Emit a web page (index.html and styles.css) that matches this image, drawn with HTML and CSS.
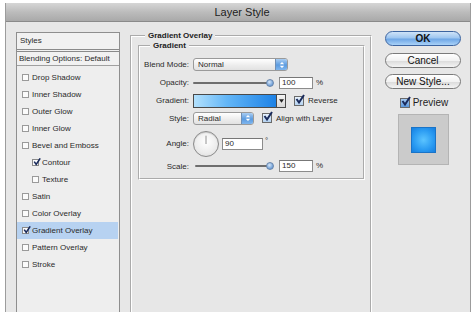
FILE: index.html
```html
<!DOCTYPE html>
<html>
<head>
<meta charset="utf-8">
<link rel="stylesheet" href="styles.css">
</head>
<body>
<div class="window">
  <div class="titlebar">Layer Style</div>
  <div class="content">
    <div class="styles">
      <div class="hdr first">Styles</div>
      <div class="hdr blend">Blending Options: Default</div>
      <ul class="items">
        <li><span class="cb"></span>Drop Shadow</li>
        <li><span class="cb"></span>Inner Shadow</li>
        <li><span class="cb"></span>Outer Glow</li>
        <li><span class="cb"></span>Inner Glow</li>
        <li><span class="cb"></span>Bevel and Emboss</li>
        <li class="sub"><span class="cb on"><svg viewBox="0 0 10 10"><path d="M1.5 4.5 L4 8 L9 0.5" fill="none" stroke="#1a2b5c" stroke-width="2"/></svg></span>Contour</li>
        <li class="sub"><span class="cb"></span>Texture</li>
        <li><span class="cb"></span>Satin</li>
        <li><span class="cb"></span>Color Overlay</li>
        <li class="sel"><span class="cb on"><svg viewBox="0 0 10 10"><path d="M1.5 4.5 L4 8 L9 0.5" fill="none" stroke="#1a2b5c" stroke-width="2"/></svg></span>Gradient Overlay</li>
        <li><span class="cb"></span>Pattern Overlay</li>
        <li><span class="cb"></span>Stroke</li>
      </ul>
    </div>

    <fieldset class="group outer">
      <legend>Gradient Overlay</legend>
      <fieldset class="group inner">
        <legend>Gradient</legend>
        <div class="form">
          <label>Blend Mode:</label>
          <div class="ctl">
            <div class="select wide"><span>Normal</span><span class="step"><svg viewBox="0 0 8 10"><path d="M4 1 L7 4 H1 Z M4 9 L7 6 H1 Z" fill="#fff"/></svg></span></div>
          </div>

          <label>Opacity:</label>
          <div class="ctl">
            <div class="slider"><span class="track"></span><span class="knob"></span></div>
            <div class="input num">100</div><span class="unit">%</span>
          </div>

          <label>Gradient:</label>
          <div class="ctl">
            <div class="swatch"><span class="grad"></span><span class="drop"><svg viewBox="0 0 6 4"><path d="M0 0 H6 L3 4 Z" fill="#222"/></svg></span></div>
            <span class="check"><svg viewBox="0 0 10 10"><path d="M1.5 4.5 L4 8 L9 0.5" fill="none" stroke="#1a2b5c" stroke-width="2"/></svg></span>
            <span class="ctext">Reverse</span>
          </div>

          <label>Style:</label>
          <div class="ctl">
            <div class="select narrow"><span>Radial</span><span class="step"><svg viewBox="0 0 8 10"><path d="M4 1 L7 4 H1 Z M4 9 L7 6 H1 Z" fill="#fff"/></svg></span></div>
            <span class="check"><svg viewBox="0 0 10 10"><path d="M1.5 4.5 L4 8 L9 0.5" fill="none" stroke="#1a2b5c" stroke-width="2"/></svg></span>
            <span class="ctext">Align with Layer</span>
          </div>

          <label>Angle:</label>
          <div class="ctl">
            <div class="dial"><svg viewBox="0 0 26 26"><line x1="13" y1="13" x2="13" y2="4" stroke="#8a8a8a" stroke-width="1"/></svg></div>
            <div class="input angle">90</div><span class="deg">°</span>
          </div>

          <label>Scale:</label>
          <div class="ctl">
            <div class="slider scale"><span class="track"></span><span class="knob"></span></div>
            <div class="input num">150</div><span class="unit">%</span>
          </div>
        </div>
      </fieldset>
    </fieldset>

    <div class="side">
      <div class="btn ok">OK</div>
      <div class="btn">Cancel</div>
      <div class="btn">New Style...</div>
      <div class="preview-row"><span class="check big"><svg viewBox="0 0 10 10"><path d="M1.5 4.5 L4 8 L9 0.5" fill="none" stroke="#1a2b5c" stroke-width="2"/></svg></span><span>Preview</span></div>
      <div class="preview"><span class="sq"></span></div>
    </div>
  </div>
</div>
</body>
</html>
```

FILE: styles.css
```css
* { box-sizing: border-box; }
html, body { margin: 0; padding: 0; background: #fff; }
body {
  width: 471px;
  height: 316px;
  overflow: hidden;
  font-family: "Liberation Sans", Arial, sans-serif;
  color: #1e1e1e;
  padding: 3px 0 0 5px;
}
.window {
  width: 466px;
  height: 309px;
  background: #e7e7e7;
  border-left: 1px solid #9c9c9c;
  border-right: 1px solid #9c9c9c;
  display: flex;
  flex-direction: column;
}
.titlebar {
  height: 19px;
  flex: none;
  background: linear-gradient(#d6d6d6, #bcbcbc 50%, #a9a9a9);
  border-bottom: 1px solid #8a8a8a;
  text-align: center;
  font-size: 11px;
  line-height: 19px;
  color: #222;
  padding-left: 8px;
}
.content {
  flex: 1;
  display: flex;
  align-items: stretch;
  padding: 9px 0 0 10px;
  min-height: 0;
}

/* Styles list */
.styles {
  width: 104px;
  flex: none;
  margin-top: 1px;
  background: #eeeeee;
  border: 1px solid #8e8e8e;
  border-bottom: none;
  font-size: 8px;
  color: #2a2a2a;
}
.hdr {
  height: 16px;
  line-height: 16px;
  padding-left: 3px;
  background: #f1f1f1;
}
.hdr.first { border-bottom: 3px double #8a8a8a; height: 19px; }
.hdr.blend { border-bottom: 1px solid #a0a0a0; height: 14px; line-height: 13px; padding-left: 2px; }
.items { list-style: none; margin: 0; padding: 3px 0 0 0; }
.items li {
  height: 17px;
  display: flex;
  align-items: center;
  padding-left: 5px;
  margin-right: 1px;
}
.items li.sub { padding-left: 15px; }
.items li.sel { background: #b7d2f1; }
.cb {
  width: 7px;
  height: 7px;
  border: 1px solid #9a9a9a;
  background: #fbfbfb;
  margin-right: 3px;
  flex: none;
  position: relative;
}
.cb.on { border-color: #8a8a8a; }
.cb svg { position: absolute; left: 0; top: -2px; width: 8px; height: 8px; }

/* Group boxes */
fieldset.group {
  margin: 0;
  border: 2px groove #ffffff;
  min-width: 0;
}
fieldset.group legend {
  font-size: 8px;
  font-weight: bold;
  line-height: 9px;
  padding: 0 3px;
  color: #222;
}
.outer {
  width: 242px;
  flex: none;
  margin-left: 10px !important;
  margin-top: 0 !important;
  padding: 0 6px 0 6px;
  border-bottom: none !important;
}
.outer > legend { margin-left: 7px; }
.inner {
  width: 227px;
  padding: 0 0 6px 0;
  margin-top: 1px !important;
}
.inner > legend { margin-left: 10px; }

.form {
  display: grid;
  grid-template-columns: 49px 1fr;
  grid-template-rows: 17px 19px 17px 18px 33px 12px;
  column-gap: 4px;
  align-items: center;
  padding-top: 6px;
  font-size: 8px;
  color: #2a2a2a;
}
.form label { text-align: right; }
.ctl { display: flex; align-items: center; }

.select {
  height: 13px;
  border: 1px solid #9a9a9a;
  border-radius: 3px;
  background: linear-gradient(#ffffff, #ececec 60%, #e2e2e2);
  display: flex;
  align-items: center;
  justify-content: space-between;
  padding-left: 4px;
  font-size: 8px;
  overflow: hidden;
}
.select.wide { width: 95px; }
.select.narrow { width: 61px; }
.step {
  width: 12px;
  height: 11px;
  background: linear-gradient(#a9cdf2, #5b9be0 55%, #7fb6ee);
  border-left: 1px solid #6f8fb5;
  display: flex;
  align-items: center;
  justify-content: center;
}
.step svg { width: 6px; height: 8px; }

.slider {
  width: 81px;
  height: 9px;
  display: flex;
  align-items: center;
}
.slider.scale { width: 79px; margin-left: 2px; }
.track {
  flex: 1;
  height: 2px;
  background: #6e6e6e;
  border-radius: 1px;
}
.knob {
  width: 8px;
  height: 8px;
  border-radius: 50%;
  background: radial-gradient(circle at 40% 35%, #d6e6f8, #6e9fd8 70%);
  border: 1px solid #6a86aa;
  margin-left: -3px;
  flex: none;
}
.input {
  height: 12px;
  border: 1px solid #8c8c8c;
  border-top-color: #777;
  background: #fff;
  font-size: 8px;
  line-height: 10px;
  padding-left: 2px;
}
.input.num { width: 34px; margin-left: 5px; }
.unit { margin-left: 3px; font-size: 8px; align-self: flex-start; margin-top: 1px; }
.deg { margin-left: 2px; font-size: 8px; margin-top: -6px; }
.swatch {
  width: 93px;
  height: 14px;
  display: flex;
  border: 1px solid #4a4a4a;
}
.grad {
  flex: 1;
  background: linear-gradient(90deg, #b3e1fd, #63b6f7 40%, #1d82e6);
  border-right: 1px solid #4a4a4a;
}
.drop {
  width: 8px;
  background: linear-gradient(#f4f4f4, #d8d8d8);
  display: flex;
  align-items: center;
  justify-content: center;
}
.drop svg { width: 5px; height: 4px; }
.check {
  width: 10px;
  height: 10px;
  border: 1px solid #6a6a6a;
  background: linear-gradient(#e8f2fc, #b4d2f0);
  margin-left: 8px;
  position: relative;
  flex: none;
}
.check svg { position: absolute; left: 0; top: -3px; width: 10px; height: 11px; }
.ctext { margin-left: 4px; font-size: 8px; }
.dial {
  width: 26px;
  height: 26px;
  border-radius: 50%;
  border: 1px solid #8a8a8a;
  background: radial-gradient(circle at 50% 40%, #ffffff, #ececec 60%, #d8d8d8);
  box-shadow: inset 0 1px 1px rgba(0,0,0,0.15);
}
.dial svg { width: 24px; height: 24px; display: block; }
.input.angle { width: 41px; margin-left: 3px; }

/* Side buttons */
.side {
  width: 76px;
  flex: none;
  margin-left: 13px;
  display: flex;
  flex-direction: column;
  align-items: center;
}
.btn {
  width: 76px;
  height: 15px;
  border: 1px solid #7a7a7a;
  border-radius: 8px;
  background: linear-gradient(#ffffff, #f2f2f2 50%, #dcdcdc 55%, #f4f4f4);
  text-align: center;
  font-size: 10px;
  line-height: 13px;
  color: #111;
  margin-bottom: 7px;
}
.btn:nth-child(2) { margin-bottom: 6px; }
.btn.ok {
  border-color: #3c64a0;
  background: linear-gradient(#cfe3f8, #9ec6f0 45%, #6fa7e6 55%, #a9d2f8);
  font-weight: bold;
}
.preview-row {
  display: flex;
  align-items: center;
  font-size: 10px;
  margin-top: 1px;
  margin-left: 2px;
}
.check.big { margin-left: 0; margin-right: 3px; background: linear-gradient(#a7cbf2, #5b97dc); }
.preview {
  width: 51px;
  height: 51px;
  margin-top: 6px;
  background: #cbcbcb;
  border: 1px solid #b4b4b4;
  display: flex;
  align-items: center;
  justify-content: center;
}
.sq {
  width: 25px;
  height: 26px;
  background: radial-gradient(circle at 50% 50%, #5bc4ff, #2a9bf2 60%, #167fe0);
  border: 1px solid #1a74c8;
}
```
